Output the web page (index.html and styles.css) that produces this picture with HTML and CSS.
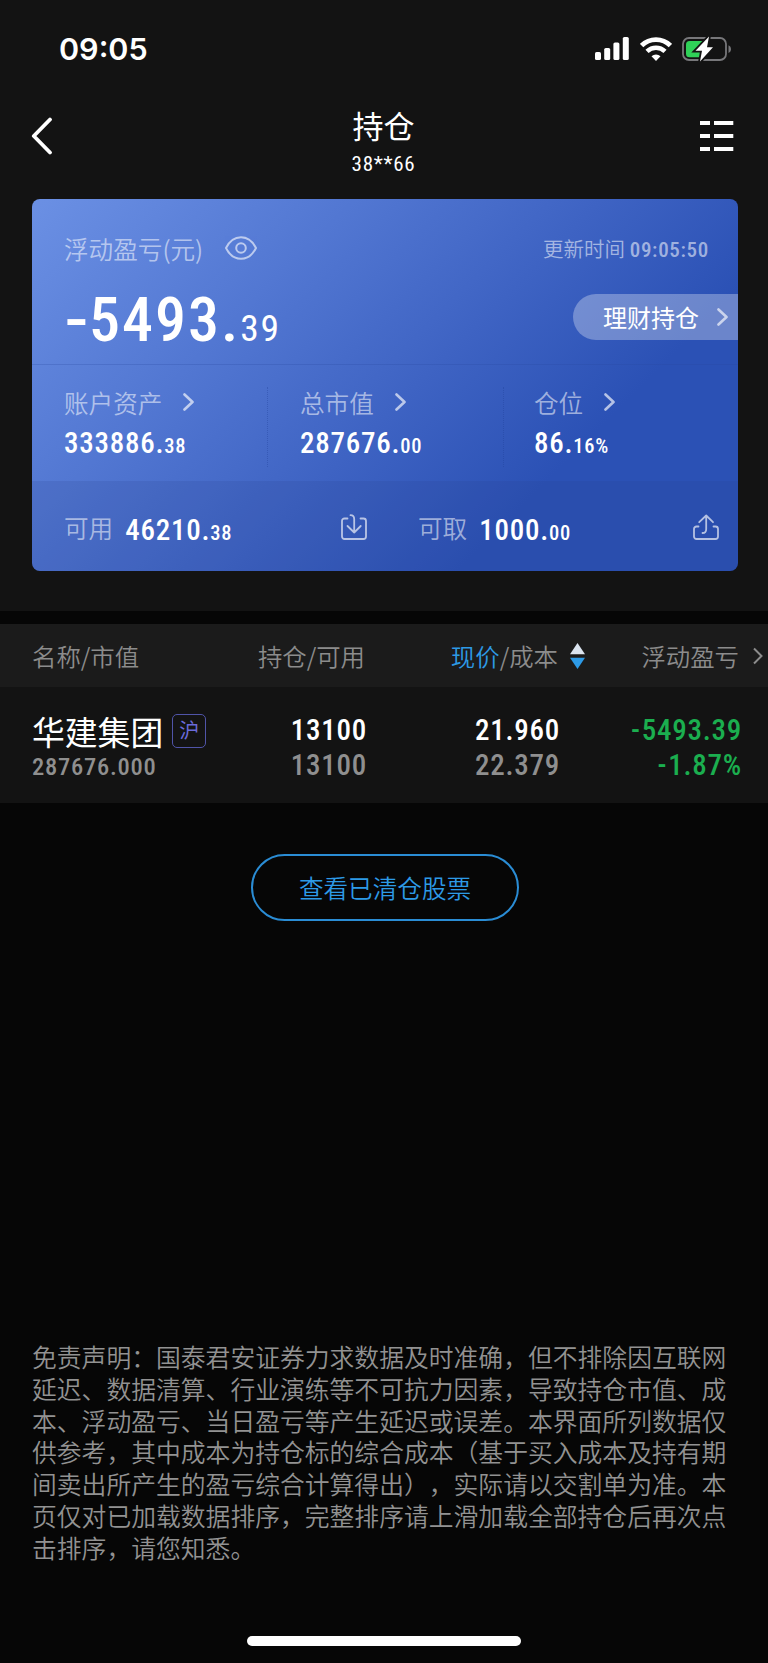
FILE: index.html
```html
<!DOCTYPE html>
<html lang="zh-CN">
<head>
    <meta charset="UTF-8">
    <meta name="viewport" content="width=device-width, initial-scale=1.0">
    <title>持仓</title>
    <link rel="stylesheet" href="styles.css">
</head>
<body>
    <div class="top">
        <div class="status-bar">
            <span class="clock">09:05</span>
            <div class="status-icons">
                <svg class="signal" width="34" height="23" viewBox="0 0 34 23" fill="#fff">
                    <rect x="0" y="15" width="6" height="8" rx="1.6"/>
                    <rect x="9.2" y="11" width="6" height="12" rx="1.6"/>
                    <rect x="18.4" y="5.5" width="6" height="17.5" rx="1.6"/>
                    <rect x="27.8" y="0" width="6" height="23" rx="1.6"/>
                </svg>
                <svg class="wifi" width="32" height="24" viewBox="0 0 32 24" fill="none" stroke="#fff">
                    <path d="M1.6 8.6a20.4 20.4 0 0 1 28.8 0" stroke-width="4.8"/>
                    <path d="M7 14.4a12.8 12.8 0 0 1 18 0" stroke-width="4.4"/>
                    <path d="M16 24l-4.5-4.7a6.5 6.5 0 0 1 9 0z" fill="#fff" stroke="none"/>
                </svg>
                <svg class="battery" width="50" height="26" viewBox="0 0 50 26">
                    <rect x="1" y="2" width="43" height="22" rx="6" fill="none" stroke="#77777a" stroke-width="1.8"/>
                    <path d="M46.5 9.2c3.3 1.4 3.3 6.4 0 7.8z" fill="#77777a"/>
                    <path d="M7.5 5H20v16.300H7.500A3.500 3.500 0 0 1 4 17.800V8.500A3.500 3.500 0 0 1 7.500 5z" fill="#30d158"/>
                    <path d="M27 .5L13.500 14.700h6.500L18 25.500 31 11.300h-6z" fill="#fff" stroke="#131313" stroke-width="3.600" paint-order="stroke"/>
                </svg>
            </div>
        </div>
        <div class="nav">
            <svg class="back" width="22" height="38" viewBox="0 0 22 38" fill="none" stroke="#fff" stroke-width="3.8" stroke-linecap="round" stroke-linejoin="round">
                <path d="M19 2.500L2.800 19 19 35.500"/>
            </svg>
            <div class="nav-title">
                <h1>持仓</h1>
                <p>38**66</p>
            </div>
            <svg class="menu" width="34" height="30" viewBox="0 0 34 30" fill="#fff">
                <path d="M0 0h10v4H0zM14 0h19.300v4H14zM0 13h10v4H0zM14 13h19.300v4H14zM0 26h10v4H0zM14 26h19.300v4H14z"/>
            </svg>
        </div>

        <div class="card">
            <div class="summary">
                <div class="summary-head">
                    <span class="label">浮动盈亏(元)</span>
                    <svg class="eye" width="32" height="24" viewBox="0 0 32 24" fill="none" stroke="#fff" stroke-width="2">
                        <path d="M1 12C4.500 5 9.500 1.200 16 1.200S27.500 5 31 12c-3.500 7-8.500 10.800-15 10.800S4.500 19 1 12z" stroke-linejoin="round"/>
                        <circle cx="16" cy="12" r="4.800"/>
                    </svg>
                    <span class="update">更新时间 <b>09:05:50</b></span>
                </div>
                <div class="summary-main">
                    <p class="profit"><i>-</i>5493.<small>39</small></p>
                    <div class="pill">
                        理财持仓
                        <svg class="arrow" width="11" height="18" viewBox="0 0 11 18"><path d="M1.500 1.500L9.500 9l-8 7.500"/></svg>
                    </div>
                </div>
            </div>
            <div class="assets">
                <div class="asset">
                    <p class="label">账户资产<svg class="arrow" width="11" height="18" viewBox="0 0 11 18"><path d="M1.500 1.500L9.500 9l-8 7.500"/></svg></p>
                    <p class="num">333886.<small>38</small></p>
                </div>
                <div class="asset">
                    <p class="label">总市值<svg class="arrow" width="11" height="18" viewBox="0 0 11 18"><path d="M1.500 1.500L9.500 9l-8 7.500"/></svg></p>
                    <p class="num">287676.<small>00</small></p>
                </div>
                <div class="asset">
                    <p class="label">仓位<svg class="arrow" width="11" height="18" viewBox="0 0 11 18"><path d="M1.500 1.500L9.500 9l-8 7.500"/></svg></p>
                    <p class="num">86.<small>16%</small></p>
                </div>
            </div>
            <div class="cash">
                <div class="cash-item">
                    <span class="label">可用</span>
                    <span class="num">46210.<small>38</small></span>
                    <svg class="transfer" width="26" height="26" viewBox="0 0 26 26">
                        <path d="M6.500 4.500H3.500a2.500 2.500 0 0 0-2.500 2.500v15.500a2.500 2.500 0 0 0 2.500 2.500h19a2.500 2.500 0 0 0 2.500-2.500V7a2.500 2.500 0 0 0-2.500-2.500h-3"/>
                        <path d="M9.500 1.200c2.500 0 3.700 1.200 3.700 3.800v13.500M6.500 12l6.700 6.500 6.500-6.500"/>
                    </svg>
                </div>
                <div class="cash-item">
                    <span class="label">可取</span>
                    <span class="num">1000.<small>00</small></span>
                    <svg class="transfer" width="26" height="26" viewBox="0 0 26 26">
                        <path d="M5.500 12.500H3.500A2.500 2.500 0 0 0 1 15v7.500A2.500 2.500 0 0 0 3.500 25h19a2.500 2.500 0 0 0 2.500-2.500V15a2.500 2.500 0 0 0-2.500-2.500h-2"/>
                        <path d="M9.500 19c2.500 0 3.700-1.200 3.700-3.800V1.500M6.200 8.200l7-6.700 6.800 6.700"/>
                    </svg>
                </div>
            </div>
        </div>
    </div>

    <div class="table">
        <div class="row table-head">
            <span>名称/市值</span>
            <span>持仓/可用</span>
            <span class="sort"><em>现价</em>/成本
                <svg width="15" height="26" viewBox="0 0 15 26">
                    <path d="M7.500 0L15 11.300H0z" fill="#dbe4ef"/>
                    <path d="M7.500 26L0 14.700h15z" fill="#2d9ae6"/>
                </svg>
            </span>
            <span class="last">浮动盈亏
                <svg class="more" width="10" height="18" viewBox="0 0 10 18"><path d="M1 1.500L8.500 9 1 16.500"/></svg>
            </span>
        </div>
        <div class="row stock">
            <div>
                <p class="name">华建集团<span class="tag">沪</span></p>
                <p class="value">287676.000</p>
            </div>
            <div>
                <p>13100</p>
                <p class="gray">13100</p>
            </div>
            <div>
                <p>21.960</p>
                <p class="gray">22.379</p>
            </div>
            <div class="down">
                <p><i>-</i>5493.39</p>
                <p><i>-</i>1.87%</p>
            </div>
        </div>
    </div>

    <button class="cleared">查看已清仓股票</button>

    <p class="disclaimer">
        免责声明：国泰君安证券力求数据及时准确，但不排除因互联网<br>
        延迟、数据清算、行业演练等不可抗力因素，导致持仓市值、成<br>
        本、浮动盈亏、当日盈亏等产生延迟或误差。本界面所列数据仅<br>
        供参考，其中成本为持仓标的综合成本（基于买入成本及持有期<br>
        间卖出所产生的盈亏综合计算得出），实际请以交割单为准。本<br>
        页仅对已加载数据排序，完整排序请上滑加载全部持仓后再次点<br>
        击排序，请您知悉。
    </p>
    <div class="home-bar"></div>
</body>
</html>
```
FILE: styles.css
```css
* {
    box-sizing: border-box;
    margin: 0;
    padding: 0;
}

body {
    width: 768px;
    height: 1663px;
    display: flex;
    flex-direction: column;
    overflow: hidden;
    background: #060606;
    color: #fff;
    font-family: "Noto Sans CJK SC", sans-serif;
    font-weight: 350;
}

svg {
    flex: none;
    display: block;
}

i, em {
    font-style: normal;
}

.top {
    height: 611px;
    background: #131313;
}

/* status bar */
.status-bar {
    height: 97px;
    padding: 0 36px 0 59px;
    display: flex;
    align-items: center;
    justify-content: space-between;
}

.clock {
    font-family: Inter, sans-serif;
    font-size: 30.5px;
    font-weight: 570;
    letter-spacing: 0;
}

.status-icons {
    display: flex;
    align-items: center;
}

.wifi {
    margin: 0 10px 0 11px;
}

/* title */
.nav {
    height: 102px;
    padding: 1px 34px 0 31px;
    display: flex;
    justify-content: space-between;
}

.back {
    margin-top: 19px;
}

.menu {
    margin-top: 23px;
}

.nav-title {
    width: 120px;
    margin-left: 14px;
    text-align: center;
}

.nav-title h1 {
    height: 48px;
    font-size: 31px;
    line-height: 53px;
    font-weight: 400;
}

.nav-title p {
    font-family: Roboto, sans-serif;
    font-size: 21px;
    line-height: 36px;
    font-weight: 450;
    font-stretch: 87.5%;
    letter-spacing: 0.7px;
}

/* blue card */
.card {
    width: 706px;
    height: 372px;
    margin-left: 32px;
    border-radius: 8px;
    overflow: hidden;
    background: linear-gradient(135deg, #6b90e4 0%, #5277d2 30%, #3e63c3 53%, #2b51b5 74%, #2b51b5 100%);
}

.label {
    font-size: 24.6px;
    line-height: 30px;
    color: rgba(255, 255, 255, 0.55);
}

.summary {
    height: 165px;
    padding: 32px 0 0 32px;
}

.summary-head {
    height: 33px;
    display: flex;
    align-items: center;
}

.eye {
    margin: 1px 0 0 22px;
    opacity: 0.6;
}

.update {
    margin-left: auto;
    padding-right: 29px;
    font-size: 20.5px;
    color: rgba(255, 255, 255, 0.55);
}

.update b {
    font-family: Roboto, sans-serif;
    font-size: 21px;
    font-weight: 500;
    font-stretch: 87.5%;
    letter-spacing: 0.7px;
}

.summary-main {
    display: flex;
    justify-content: space-between;
    padding-top: 30px;
}

.profit {
    height: 50px;
    font-family: Roboto, sans-serif;
    font-size: 62px;
    line-height: 52px;
    font-weight: 500;
    font-stretch: 87.5%;
    letter-spacing: 2px;
}

.profit i {
    display: inline-block;
    width: 25px;
    transform: scaleX(1.3);
    transform-origin: left;
}

.profit small {
    font-size: 37.5px;
    font-weight: 450;
    letter-spacing: 1.6px;
}

.pill {
    width: 165px;
    height: 46px;
    padding: 0 10px 0 30px;
    display: flex;
    align-items: center;
    justify-content: space-between;
    border-radius: 23px 0 0 23px;
    background: rgba(255, 255, 255, 0.3);
    font-size: 24px;
    font-weight: 400;
    line-height: 44px;
}

.arrow {
    fill: none;
    stroke: rgba(255, 255, 255, 0.65);
    stroke-width: 2.6;
    stroke-linecap: round;
    stroke-linejoin: round;
}

.assets {
    height: 117px;
    border-top: 1px solid rgba(40, 70, 160, 0.25);
    padding: 22px 0 23px;
    display: grid;
    grid-template-columns: 236px 236px 1fr;
}

.asset {
    padding-left: 32px;
    border-right: 1px dotted rgba(30, 60, 150, 0.35);
}

.asset:last-child {
    padding-left: 30px;
    border: none;
}

.asset .label {
    display: flex;
    align-items: center;
    gap: 21px;
}

.num {
    height: 50px;
    font-family: Roboto, sans-serif;
    font-size: 29px;
    line-height: 53px;
    font-weight: 500;
    font-stretch: 87.5%;
    letter-spacing: 0.75px;
}

.num small {
    font-size: 20.5px;
}

.cash {
    height: 90px;
    display: grid;
    grid-template-columns: 354px 352px;
    background: rgba(40, 65, 140, 0.17);
}

.cash-item {
    padding: 1px 19px 0 32px;
    display: flex;
    align-items: center;
}

.cash-item .num {
    margin: 4px 0 0 12px;
}

.transfer {
    margin-left: auto;
    fill: none;
    stroke: #fff;
    stroke-width: 1.8;
    stroke-linecap: round;
    stroke-linejoin: round;
    opacity: 0.65;
}

/* holdings */
.table {
    margin-top: 13px;
}

.row {
    display: grid;
    grid-template-columns: 217px 150px 193px 208px;
}

.row > * {
    text-align: right;
}

.row > :first-child {
    padding-left: 32px;
    text-align: left;
}

.table-head {
    height: 63px;
    background: #1b1b1b;
    color: #8c8c8c;
    font-size: 24.4px;
    line-height: 63px;
}

.table-head > :nth-child(2) {
    padding-right: 2px;
}

.table-head em {
    color: #2d9ae6;
}

.sort, .last {
    display: flex;
    align-items: center;
    justify-content: flex-end;
}

.sort {
    margin-right: -25px;
}

.sort svg {
    margin-left: 12px;
}

.last {
    padding-right: 5px;
}

.more {
    margin-left: 14px;
    fill: none;
    stroke: #8c8c8c;
    stroke-width: 2;
}

.stock {
    height: 116px;
    padding-top: 26px;
    background: #131313;
    font-family: Roboto, sans-serif;
    font-size: 29px;
    line-height: 35px;
    font-weight: 500;
    font-stretch: 87.5%;
    letter-spacing: 0.75px;
}

.stock .name {
    display: flex;
    align-items: center;
    height: 34px;
    margin-bottom: 2px;
    white-space: nowrap;
    font-family: "Noto Sans CJK SC", sans-serif;
    font-size: 32.8px;
    font-weight: 400;
    letter-spacing: 0;
}

.tag {
    width: 34px;
    height: 34px;
    margin: 2px 0 0 9px;
    border: 1.5px solid #5054a8;
    border-radius: 5px;
    color: #6a6ad8;
    font-size: 20px;
    line-height: 30px;
    text-align: center;
}

.value {
    color: #8f8f8f;
    font-size: 24.5px;
}

.gray {
    color: #8f8f8f;
}

.down {
    padding-right: 26px;
    color: #1bae4f;
}

.down i {
    margin-right: 1px;
}

.cleared {
    flex: none;
    width: 268px;
    height: 67px;
    margin: 51px 0 0 251px;
    padding-bottom: 2px;
    border: 2px solid #2a8cd4;
    border-radius: 34px;
    background: none;
    color: #2d9ae6;
    font-family: inherit;
    font-size: 24.6px;
    font-weight: 350;
}

.disclaimer {
    margin: 420px 0 0 32px;
    white-space: nowrap;
    text-spacing-trim: space-all;
    color: #929292;
    font-size: 24.8px;
    line-height: 31.8px;
}

.home-bar {
    width: 274px;
    height: 10px;
    margin: auto auto 17px 247px;
    border-radius: 5px;
    background: #fff;
}
```
